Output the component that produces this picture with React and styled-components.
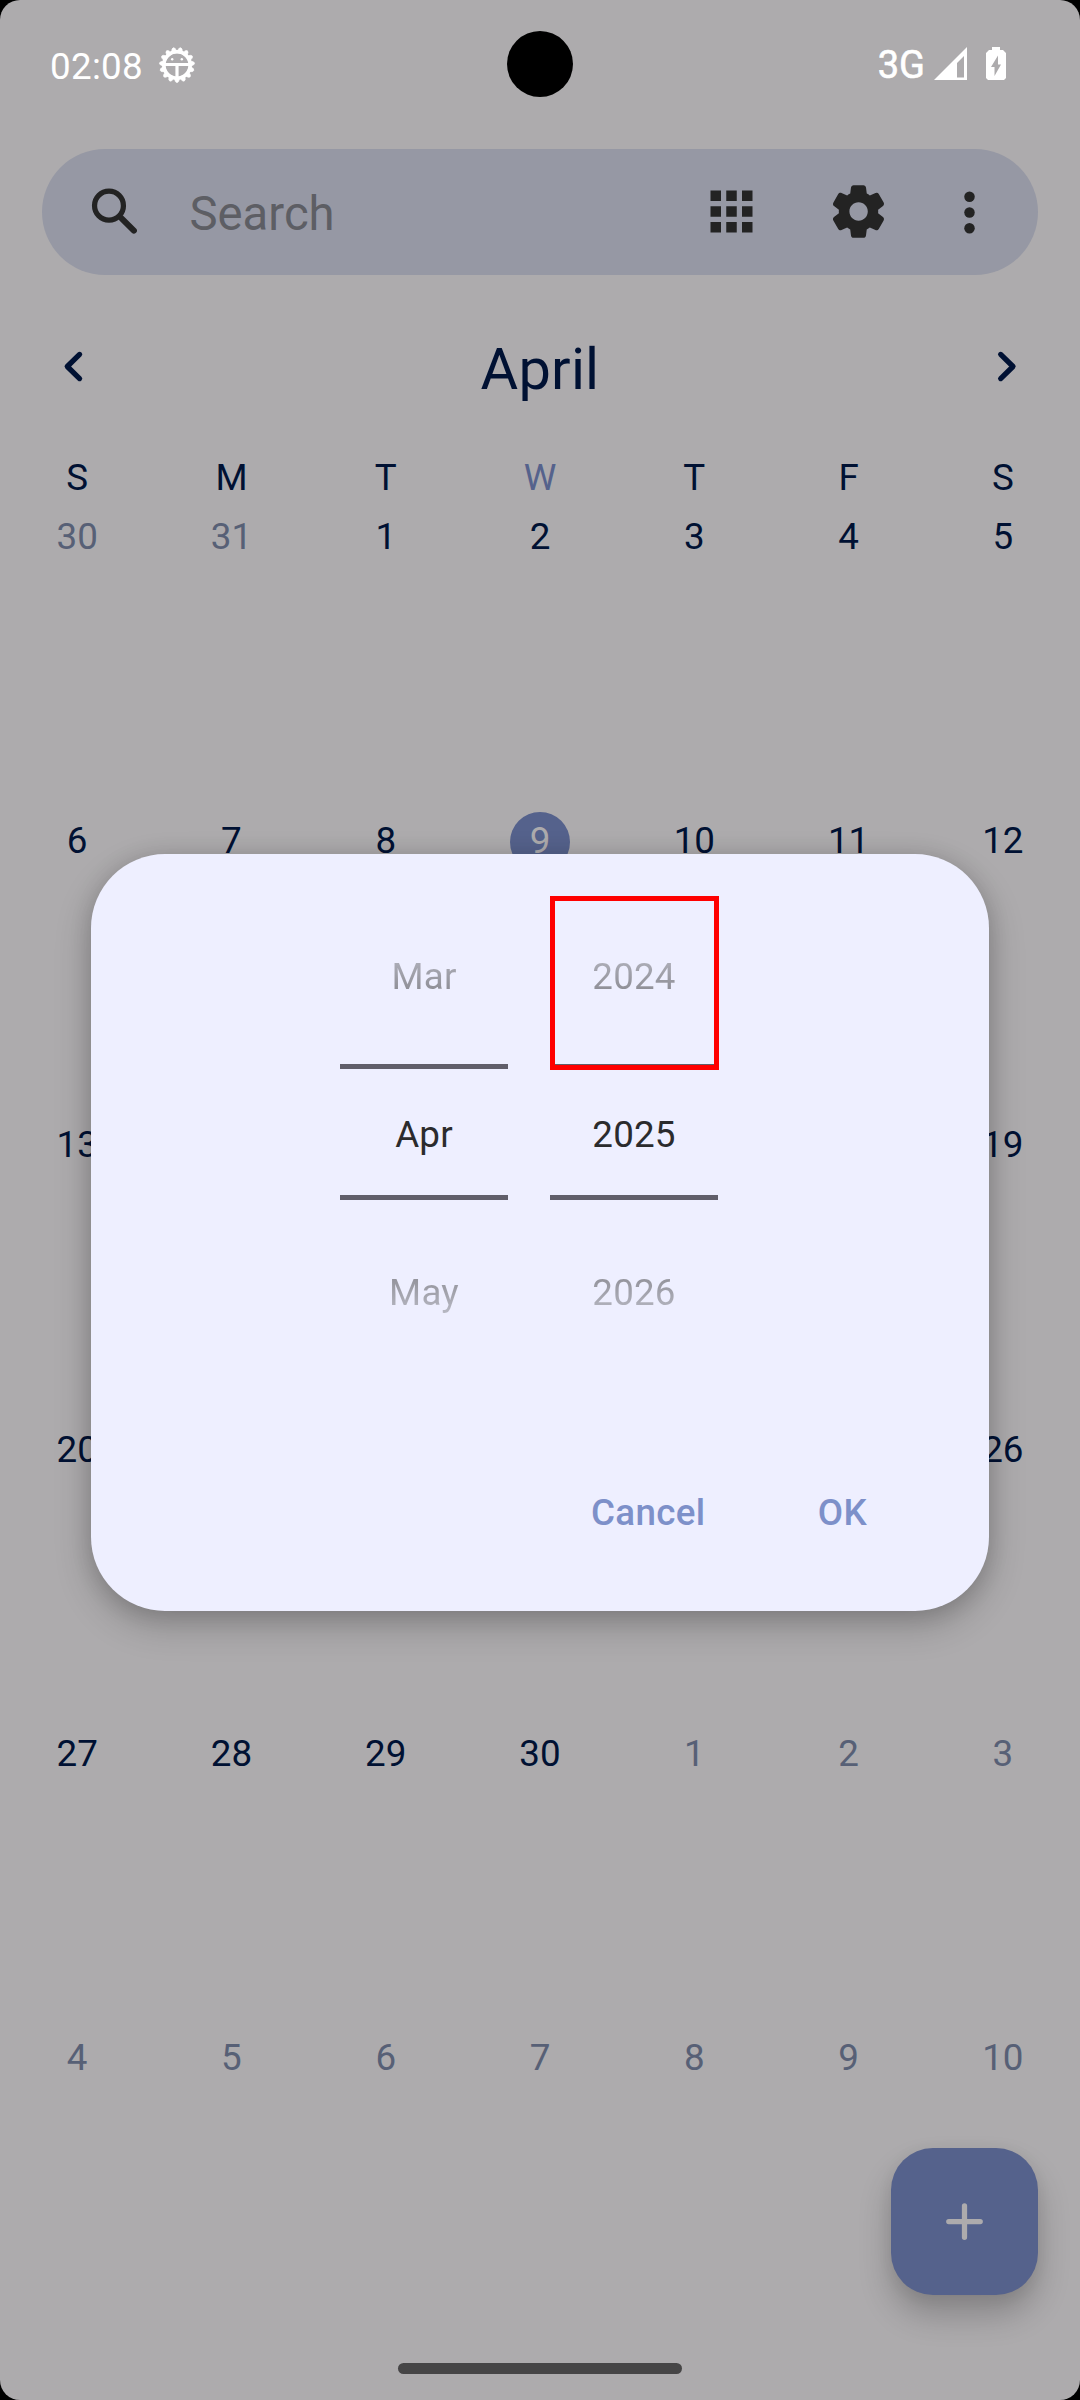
import React from "react";
import styled, { createGlobalStyle } from "styled-components";

const Global = createGlobalStyle`
  html, body { margin: 0; background: #000; }
  * { box-sizing: border-box; }
  button { border: 0; padding: 0; background: none; font: inherit; color: inherit; letter-spacing: inherit; }
`;

const Screen = styled.div`
  position: relative;
  width: 1080px;
  height: 2400px;
  display: flex;
  flex-direction: column;
  overflow: hidden;
  border-radius: 20px;
  background: #adabad;
  color: #001133;
  font-family: Roboto, "Liberation Sans", sans-serif;
  font-size: 36.75px;
`;

const StatusBar = styled.header`
  height: 149px;
  flex: none;
  display: flex;
  align-items: flex-start;
  justify-content: space-between;
  padding: 0 73px 0 50px;
  color: #fff;
`;

const StatusGroup = styled.div`
  display: flex;
  align-items: center;
  height: 130px;
`;

const Camera = styled.div`
  position: absolute;
  left: 507px;
  top: 31px;
  width: 66px;
  height: 66px;
  border-radius: 50%;
  background: #000;
`;

const Clock = styled.span`
  line-height: 44px;
  letter-spacing: 0.3px;
  margin: 4px 15px 0 0;
`;

const Network = styled.span`
  font-size: 38px;
  line-height: 44px;
  -webkit-text-stroke: 0.6px #fff;
  margin: -1px 9px 0 0;
`;

const Glyph = styled.svg`
  display: block;
  flex: none;
  width: ${(p) => p.$w}px;
  height: ${(p) => p.$h || p.$w}px;
  margin: ${(p) => p.$m || "0"};
`;

const SearchBar = styled.div`
  height: 126px;
  flex: none;
  margin: 0 42px;
  padding: 0 37px 0 42px;
  border-radius: 63px;
  background: #9698a4;
  color: #232323;
  display: flex;
  align-items: center;
`;

const Placeholder = styled.span`
  flex: 1;
  margin-left: 42.5px;
  font-size: 47.25px;
  line-height: 56px;
  color: #5d5e64;
  padding-top: 3px;
`;

const MonthBar = styled.div`
  height: 181px;
  flex: none;
  padding: 2px 40.5px 0;
  display: flex;
  align-items: center;
  justify-content: space-between;
`;

const MonthTitle = styled.h1`
  margin: 5px 0 0;
  font-size: 57.75px;
  line-height: 68px;
  font-weight: 400;
  letter-spacing: 0.2px;
`;

const Weekdays = styled.div`
  display: grid;
  grid-template-columns: repeat(7, 1fr);
  height: 52px;
  flex: none;
  text-align: center;
  line-height: 44px;
`;

const Weekday = styled.span`
  color: ${(p) => (p.$today ? "#55628c" : "inherit")};
`;

const MonthGrid = styled.div`
  flex: none;
  display: grid;
  grid-template-columns: repeat(7, 1fr);
  grid-auto-rows: 304.2px;
`;

const DayCell = styled.div`
  display: flex;
  justify-content: center;
  align-items: flex-start;
`;

const DayNumber = styled.span`
  min-width: 60px;
  height: 60px;
  border-radius: 30px;
  line-height: 57px;
  text-align: center;
  background: ${(p) => (p.$today ? "#55628c" : "transparent")};
  color: ${(p) => (p.$today ? "#adabad" : p.$outside ? "#576076" : "#001133")};
`;

const AddButton = styled.button`
  position: absolute;
  right: 42px;
  bottom: 105px;
  width: 147px;
  height: 147px;
  border-radius: 42px;
  background: #55628c;
  color: #adabad;
  display: flex;
  align-items: center;
  justify-content: center;
  box-shadow: 0 20px 32px rgba(0, 0, 0, 0.22), 0 3px 16px rgba(0, 0, 0, 0.06);
`;

const HomeHandle = styled.div`
  position: absolute;
  left: 398px;
  bottom: 26px;
  width: 284px;
  height: 11px;
  border-radius: 6px;
  background: #464546;
`;

const Dialog = styled.section`
  position: absolute;
  left: 91px;
  top: 854px;
  width: 898px;
  height: 757px;
  border-radius: 74px;
  background: #eeefff;
  box-shadow: 0 14px 36px rgba(0, 0, 0, 0.22), 0 2px 22px rgba(0, 0, 0, 0.13);
  display: flex;
  flex-direction: column;
`;

const Pickers = styled.div`
  display: flex;
  gap: 42px;
  margin: 42px 0 0 249px;
  height: 472px;
`;

const Wheel = styled.div`
  width: 168px;
  height: 472px;
  display: flex;
  flex-direction: column;
  align-items: center;
  text-align: center;
  line-height: 44px;
  letter-spacing: 0.2px;
  color: #2b2b2d;
`;

const CurrentChoice = styled.span`
  width: 168px;
  height: 136px;
  padding-top: 44px;
  border: solid #605e6a;
  border-width: 5px 0;
`;

const FadedChoice = styled.span`
  width: 168px;
  height: 168px;
  padding-top: ${(p) => (p.$below ? 71 : 59)}px;
  color: transparent;
  background: linear-gradient(
    ${(p) => (p.$below ? "to bottom" : "to top")},
    #7d7d85 0,
    #8f8f97 74px,
    #b7b8c3 113px,
    #eeefff 168px
  );
  background-clip: text;
  -webkit-background-clip: text;
`;

const FocusFrame = styled.div`
  position: absolute;
  left: 459px;
  top: 42px;
  width: 169px;
  height: 174px;
  border: 5px solid #f00;
`;

const Actions = styled.footer`
  display: flex;
  justify-content: flex-end;
  gap: 112.5px;
  margin: 123px 122px 0 0;
  color: #7d90c9;
  font-weight: 500;
  line-height: 44px;
  letter-spacing: 0.3px;
`;

const Action = styled.button`
  height: 44px;
`;

const weekdays = ["S", "M", "T", "W", "T", "F", "S"];
const days = Array.from({ length: 42 }, (_, i) => {
  if (i < 2) return { label: 30 + i, outside: true };
  if (i < 32) return { label: i - 1, outside: false };
  return { label: i - 31, outside: true };
});
const wheels = [
  ["Mar", "Apr", "May"],
  ["2024", "2025", "2026"],
];

const teeth = Array.from({ length: 15 }, (_, i) => 90 + i * 24);

function DebugIcon() {
  return (
    <Glyph $w={38} viewBox="0 0 38 38" fill="none" stroke="#fff">
      {teeth.map((a) => (
        <path key={a} d="M31 15.8 35.6 17.4Q37.8 19 35.6 20.6L31 22.2Z" fill="#fff" strokeWidth="0.6" transform={`rotate(${a} 19 19)`} />
      ))}
      <circle cx="19" cy="19" r="13.2" strokeWidth="3.6" />
      <path d="M6 18.5H32M19 19V32" strokeWidth="3.2" />
      <circle cx="14.2" cy="13.2" r="1.2" fill="#fff" stroke="none" />
      <circle cx="23.8" cy="13.2" r="1.2" fill="#fff" stroke="none" />
    </Glyph>
  );
}

export default function App() {
  return (
    <>
      <Global />
      <Screen>
        <StatusBar>
          <StatusGroup>
            <Clock>02:08</Clock>
            <DebugIcon />
          </StatusGroup>
          <StatusGroup>
            <Network>3G</Network>
            <Glyph $w={34} viewBox="0 0 34 34" $m="-2px 17px 0 0">
              <path fill="#fff" fillRule="evenodd" d="M0 33 33 0V33ZM23 30.5H30V9L23 16Z" />
            </Glyph>
            <Glyph $w={22} $h={34} viewBox="0 0 22 34" $m="-2px 0 0">
              <path fill="#fff" fillRule="evenodd" d="M7 0H15V3H18L21 6V31L19 33H3L1 31V6L4 3H7ZM13 8.5 6 20H9.5V29L16 17.5H13Z" />
            </Glyph>
          </StatusGroup>
        </StatusBar>
        <Camera />

        <SearchBar>
          <Glyph $w={63} viewBox="0 0 24 24" fill="none" stroke="currentColor">
            <circle cx="9.52" cy="9.4" r="5.5" strokeWidth="2" />
            <path d="M14.4 14.3 19 18.9" strokeWidth="2.3" strokeLinecap="round" />
          </Glyph>
          <Placeholder>Search</Placeholder>
          <Glyph $w={63} viewBox="0 0 24 24" $m="0 64px 1px 0" fill="currentColor">
            <path d="M4 4h4v4H4zM10 4h4v4h-4zM16 4h4v4h-4zM4 10h4v4H4zM10 10h4v4h-4zM16 10h4v4h-4zM4 16h4v4H4zM10 16h4v4h-4zM16 16h4v4h-4z" />
          </Glyph>
          <Glyph $w={63} viewBox="0 0 24 24" $m="0 48px 1px 0" fill="currentColor">
            <path d="M19.5 12c0-.23-.01-.45-.03-.68l1.86-1.41c.4-.3.51-.86.26-1.3l-1.87-3.23a.99.99 0 0 0-1.25-.42l-2.15.91c-.37-.26-.76-.49-1.17-.68l-.29-2.31C14.8 2.38 14.37 2 13.87 2h-3.73c-.51 0-.94.38-1 .88l-.29 2.31c-.41.19-.8.42-1.17.68l-2.15-.91c-.46-.2-1-.02-1.25.42L2.41 8.62c-.25.44-.14.99.26 1.3l1.86 1.41a7.3 7.3 0 0 0 0 1.35l-1.86 1.41c-.4.3-.51.86-.26 1.3l1.87 3.23c.25.44.79.62 1.25.42l2.15-.91c.37.26.76.49 1.17.68l.29 2.31c.06.5.49.88.99.88h3.73c.5 0 .93-.38.99-.88l.29-2.31c.41-.19.8-.42 1.17-.68l2.15.91c.46.2 1 .02 1.25-.42l1.87-3.23c.25-.44.14-.99-.26-1.3l-1.86-1.41c.03-.23.04-.45.04-.68zm-7.46 3.5c-1.93 0-3.5-1.57-3.5-3.5s1.57-3.5 3.5-3.5 3.5 1.57 3.5 3.5-1.57 3.5-3.5 3.5z" />
          </Glyph>
          <Glyph $w={63} viewBox="0 0 24 24" fill="currentColor">
            <circle cx="12" cy="6" r="2" />
            <circle cx="12" cy="12" r="2" />
            <circle cx="12" cy="18" r="2" />
          </Glyph>
        </SearchBar>

        <MonthBar>
          <Glyph $w={63} viewBox="0 0 24 24" fill="none" stroke="currentColor">
            <path d="M14.7 7.4 10 12l4.7 4.6" strokeWidth="2" strokeLinecap="round" strokeLinejoin="round" />
          </Glyph>
          <MonthTitle>April</MonthTitle>
          <Glyph $w={63} viewBox="0 0 24 24" fill="none" stroke="currentColor">
            <path d="M9.4 7.4 14.1 12l-4.7 4.6" strokeWidth="2" strokeLinecap="round" strokeLinejoin="round" />
          </Glyph>
        </MonthBar>

        <Weekdays>
          {weekdays.map((d, i) => (
            <Weekday key={i} $today={i === 3}>{d}</Weekday>
          ))}
        </Weekdays>
        <MonthGrid>
          {days.map((d, i) => (
            <DayCell key={i}>
              <DayNumber $outside={d.outside} $today={i === 10}>{d.label}</DayNumber>
            </DayCell>
          ))}
        </MonthGrid>

        <AddButton aria-label="Add">
          <Glyph $w={63} viewBox="0 0 24 24" fill="none" stroke="currentColor">
            <path d="M12 6v12M6 12h12" strokeWidth="2" strokeLinecap="round" />
          </Glyph>
        </AddButton>
        <HomeHandle />

        <Dialog>
          <Pickers>
            {wheels.map(([before, current, after]) => (
              <Wheel key={current}>
                <FadedChoice>{before}</FadedChoice>
                <CurrentChoice>{current}</CurrentChoice>
                <FadedChoice $below>{after}</FadedChoice>
              </Wheel>
            ))}
          </Pickers>
          <FocusFrame />
          <Actions>
            <Action>Cancel</Action>
            <Action>OK</Action>
          </Actions>
        </Dialog>
      </Screen>
    </>
  );
}
